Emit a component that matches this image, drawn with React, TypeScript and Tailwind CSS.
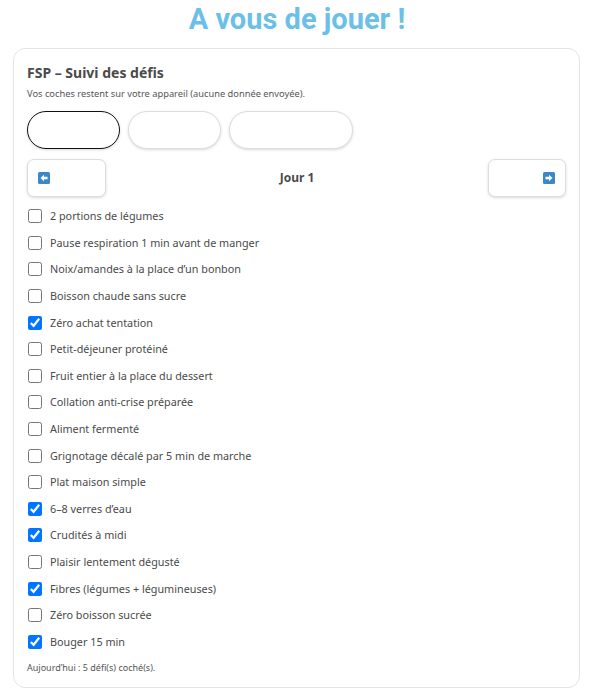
import React from "react"

const defis = [
  { label: "2 portions de légumes", done: false },
  { label: "Pause respiration 1 min avant de manger", done: false },
  { label: "Noix/amandes à la place d’un bonbon", done: false },
  { label: "Boisson chaude sans sucre", done: false },
  { label: "Zéro achat tentation", done: true },
  { label: "Petit-déjeuner protéiné", done: false },
  { label: "Fruit entier à la place du dessert", done: false },
  { label: "Collation anti-crise préparée", done: false },
  { label: "Aliment fermenté", done: false },
  { label: "Grignotage décalé par 5 min de marche", done: false },
  { label: "Plat maison simple", done: false },
  { label: "6–8 verres d’eau", done: true },
  { label: "Crudités à midi", done: true },
  { label: "Plaisir lentement dégusté", done: false },
  { label: "Fibres (légumes + légumineuses)", done: true },
  { label: "Zéro boisson sucrée", done: false },
  { label: "Bouger 15 min", done: true },
]

function ArrowBox({ dir }: { dir: "left" | "right" }) {
  return (
    <svg width="12" height="12" viewBox="0 0 12 12">
      <rect x="0" y="0" width="12" height="12" rx="1.5" fill="#3b88c9" />
      {dir === "left" ? (
        <path d="M2.5 6 L6 2.8 V4.8 H9.5 V7.2 H6 V9.2 Z" fill="#fff" />
      ) : (
        <path d="M9.5 6 L6 2.8 V4.8 H2.5 V7.2 H6 V9.2 Z" fill="#fff" />
      )}
    </svg>
  )
}

export default function App() {
  const count = defis.filter((d) => d.done).length

  return (
    <div className="min-h-[697px] bg-white px-[13px] pt-[1px] text-[#444]" style={{ fontFamily: '"Noto Sans", Lato, sans-serif' }}>
      <h1
        className="text-center text-[29px] font-bold leading-[36px] text-[#6cbfe7]"
        style={{ fontFamily: 'Roboto, "Noto Sans", sans-serif' }}
      >
        A vous de jouer !
      </h1>

      <div className="mt-[11px] w-[567px] rounded-[12px] border border-[#e4e4e4] px-[13px] pt-[14px] pb-[12px]">
        <h2 className="text-[14px] font-bold leading-[20px] text-[#4a4a4a]">FSP – Suivi des défis</h2>
        <p className="mt-[5px] text-[9.3px] leading-[12px] text-[#555]">
          Vos coches restent sur votre appareil (aucune donnée envoyée).
        </p>

        <div className="mt-[11px] flex gap-[8px]">
          <button className="h-[38px] w-[93px] rounded-full border border-[#111] bg-white shadow-[0_1px_3px_rgba(0,0,0,0.15)]" />
          <button className="h-[38px] w-[93px] rounded-full border border-[#ddd] bg-white shadow-[0_1px_3px_rgba(0,0,0,0.15)]" />
          <button className="h-[38px] w-[124px] rounded-full border border-[#ddd] bg-white shadow-[0_1px_3px_rgba(0,0,0,0.15)]" />
        </div>

        <div className="mt-[10px] flex items-center justify-between">
          <button className="flex h-[38px] w-[79px] items-center rounded-[7px] border border-[#ddd] bg-white pl-[10px] shadow-[0_1px_3px_rgba(0,0,0,0.15)]">
            <ArrowBox dir="left" />
          </button>
          <span className="text-[12px] font-bold text-[#4a4a4a]">Jour 1</span>
          <button className="flex h-[38px] w-[78px] items-center justify-end rounded-[7px] border border-[#ddd] bg-white pr-[10px] shadow-[0_1px_3px_rgba(0,0,0,0.15)]">
            <ArrowBox dir="right" />
          </button>
        </div>

        <ul className="mt-[6px] flex flex-col">
          {defis.map((d, i) => (
            <li key={i} className="flex h-[26.6px] items-center gap-[8px]">
              <input type="checkbox" defaultChecked={d.done} className="m-0 ml-[1px] h-[14px] w-[14px]" />
              <span className="text-[10.8px] text-[#4a4a4a]">{d.label}</span>
            </li>
          ))}
        </ul>

        <p className="mt-[6px] text-[9px] text-[#555]">Aujourd’hui : {count} défi(s) coché(s).</p>
      </div>
    </div>
  )
}
